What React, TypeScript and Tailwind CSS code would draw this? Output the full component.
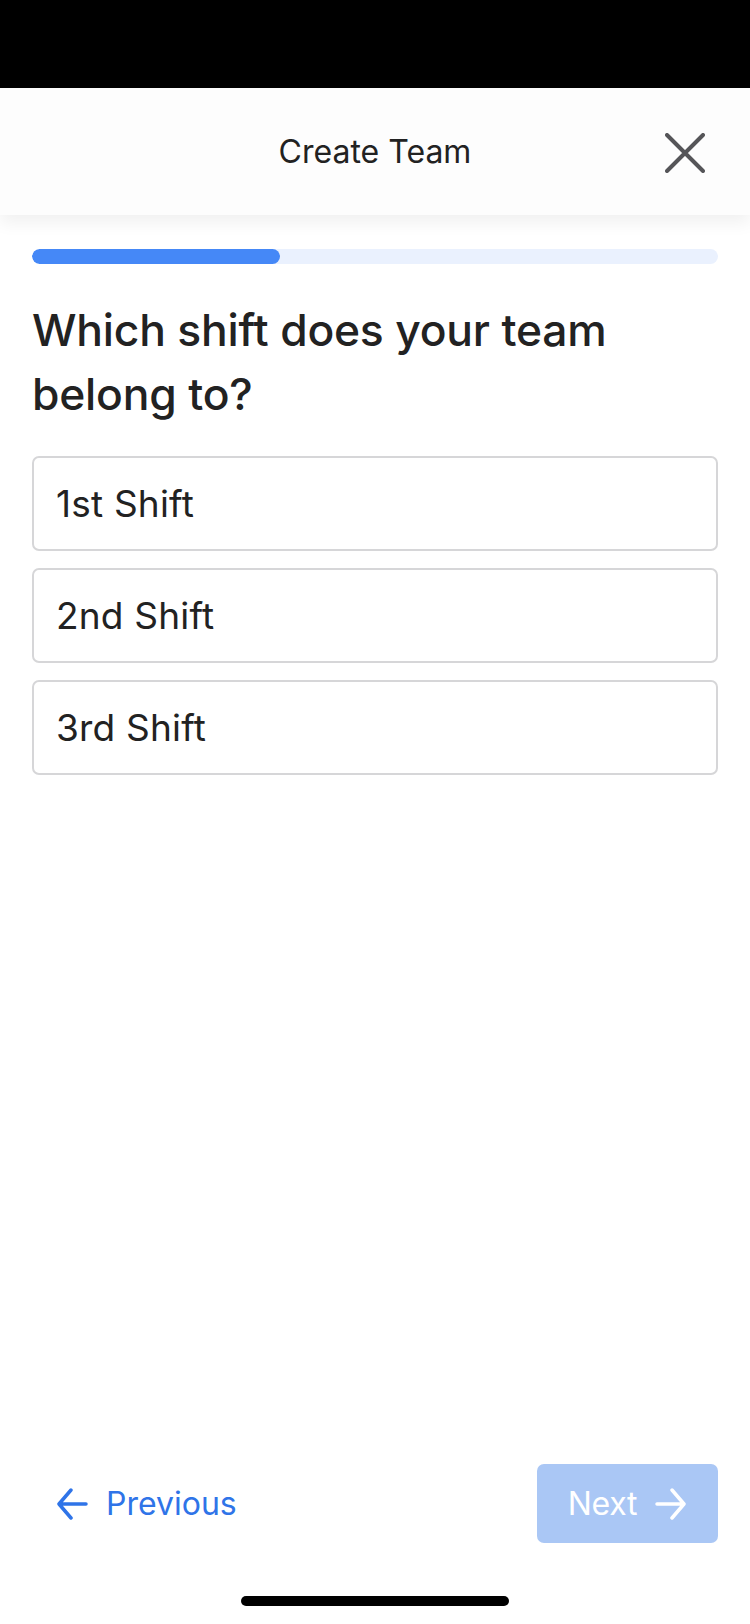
import React from "react";

function XIcon() {
  return (
    <svg width="40" height="40" viewBox="0 0 40 40" fill="none">
      <path d="M2 2 L38 38 M38 2 L2 38" stroke="#555558" strokeWidth="4" strokeLinecap="round" />
    </svg>
  );
}

function ArrowLeft({ color }: { color: string }) {
  return (
    <svg width="32" height="32" viewBox="0 0 32 32" fill="none">
      <path d="M30 16 H3 M15 2 L3 16 L15 30" stroke={color} strokeWidth="3.5" strokeLinecap="round" strokeLinejoin="round" />
    </svg>
  );
}

function ArrowRight({ color }: { color: string }) {
  return (
    <svg width="32" height="32" viewBox="0 0 32 32" fill="none">
      <path d="M2 16 H29 M17 2 L29 16 L17 30" stroke={color} strokeWidth="3.5" strokeLinecap="round" strokeLinejoin="round" />
    </svg>
  );
}

export default function App() {
  const options = ["1st Shift", "2nd Shift", "3rd Shift"];
  return (
    <div
      className="w-[750px] h-[1624px] bg-white flex flex-col overflow-hidden"
      style={{ fontFamily: "Inter, 'Liberation Sans', sans-serif" }}
    >
      <div className="h-[88px] bg-black shrink-0" />
      <div className="h-[127px] bg-[#fdfdfd] shrink-0 relative flex items-center justify-center shadow-[0_8px_16px_rgba(0,0,0,0.06)] z-10">
        <span className="text-[32px] text-[#222222]">Create Team</span>
        <div className="absolute right-[45px] top-[45px]">
          <XIcon />
        </div>
      </div>
      <div className="px-8 pt-[34px] flex flex-col flex-1">
        <div className="h-[15px] rounded-full bg-[#eaf1fe] overflow-hidden">
          <div className="h-full w-[248px] rounded-full bg-[#4588f7]" />
        </div>
        <h1 className="mt-[34px] text-[44.4px] leading-[64px] font-medium text-[#222222] tracking-[-0.2px]">
          Which shift does your team belong to?
        </h1>
        <div className="mt-[30px] flex flex-col gap-[17px]">
          {options.map((o) => (
            <div
              key={o}
              className="h-[95px] border-2 border-[#d6d6d8] rounded-[7px] flex items-center pl-[22px] text-[37px] text-[#222222] tracking-[0.2px]"
            >
              {o}
            </div>
          ))}
        </div>
        <div className="flex-1" />
        <div className="flex items-center justify-between">
          <div className="flex items-center gap-[18px] pl-6">
            <ArrowLeft color="#2f74e8" />
            <span className="text-[32px] text-[#2f74e8]">Previous</span>
          </div>
          <div className="w-[181px] h-[79px] rounded-[7px] bg-[#aac7f5] flex items-center justify-center gap-[18px]">
            <span className="text-[32px] text-white tracking-[-0.3px]">Next</span>
            <ArrowRight color="#ffffff" />
          </div>
        </div>
        <div className="h-[53px]" />
        <div className="flex justify-center">
          <div className="w-[268px] h-[10px] rounded-full bg-black" />
        </div>
        <div className="h-[18px]" />
      </div>
    </div>
  );
}
